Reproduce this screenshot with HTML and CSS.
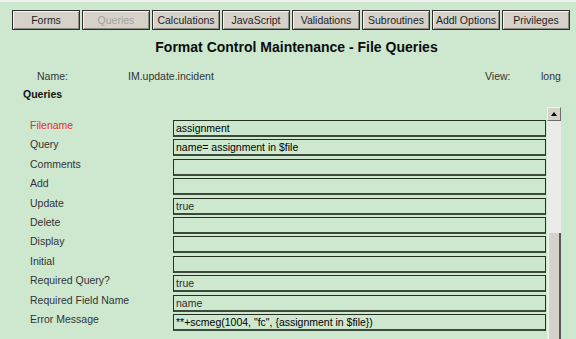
FILE: index.html
```html
<!DOCTYPE html>
<html lang="en">
<head>
    <meta charset="UTF-8">
    <title>Format Control Maintenance - File Queries</title>
    <link rel="stylesheet" href="styles.css">
</head>
<body>
    <div class="topbar"></div>

    <div class="tabs">
        <button class="tab">Forms</button>
        <button class="tab disabled">Queries</button>
        <button class="tab">Calculations</button>
        <button class="tab">JavaScript</button>
        <button class="tab">Validations</button>
        <button class="tab">Subroutines</button>
        <button class="tab">Addl Options</button>
        <button class="tab">Privileges</button>
    </div>

    <h1>Format Control Maintenance - File Queries</h1>

    <div class="info">
        <span class="info-label">Name:</span>
        <span>IM.update.incident</span>
        <span class="info-label">View:</span>
        <span>long</span>
    </div>

    <h2>Queries</h2>

    <div class="panel">
        <div class="rows">
            <label class="required">Filename</label>
            <div class="field big">assignment</div>
            <label>Query</label>
            <div class="field big">name= assignment in $file</div>
            <label>Comments</label>
            <div class="field"></div>
            <label>Add</label>
            <div class="field"></div>
            <label>Update</label>
            <div class="field">true</div>
            <label>Delete</label>
            <div class="field"></div>
            <label>Display</label>
            <div class="field"></div>
            <label>Initial</label>
            <div class="field"></div>
            <label>Required Query?</label>
            <div class="field">true</div>
            <label>Required Field Name</label>
            <div class="field">name</div>
            <label>Error Message</label>
            <div class="field big">**+scmeg(1004, "fc", {assignment in $file})</div>
        </div>
        <div class="scrollbar">
            <div class="scroll-btn"><span class="arrow"></span></div>
            <div class="thumb"></div>
        </div>
    </div>
</body>
</html>
```

FILE: styles.css
```css
body {
    margin: 0;
    background-color: #cde8cf;
    font-family: 'Liberation Sans', Arial, sans-serif;
    font-size: 10.5px;
    color: #2b2b2b;
    overflow: hidden;
}
.topbar {
    height: 2px;
    background-color: #eef1ee;
}
.tabs {
    display: flex;
    gap: 2px;
    padding-left: 12px;
    margin-top: 8px;
}
.tab {
    width: 68px;
    height: 20px;
    padding: 0;
    background-color: #d6d2ca;
    border: 1px solid #2e2e2e;
    box-shadow: inset 1px 1px 0 #f4f2ee, inset -1px -1px 0 #8e8b85;
    font-family: 'Liberation Sans', Arial, sans-serif;
    font-size: 10.5px;
    color: #1e1e1e;
}
.tab.disabled {
    color: #a4a29e;
}
h1 {
    margin: 9px 0 0 17px;
    text-align: center;
    font-size: 14px;
    line-height: 16px;
    color: #0c0c0c;
}
.info {
    display: grid;
    grid-template-columns: 91px 357px 56px auto;
    padding-left: 37px;
    margin-top: 15px;
    line-height: 12px;
    color: #333;
}
h2 {
    margin: 6px 0 0 23px;
    font-size: 10.5px;
    line-height: 12px;
    color: #111;
}
.panel {
    display: flex;
    margin-top: 7px;
    height: 240px;
}
.rows {
    display: grid;
    grid-template-columns: 143px 373px;
    grid-auto-rows: 17px;
    row-gap: 2.4px;
    padding: 13px 0 0 30px;
    align-items: start;
}
.rows label {
    line-height: 11px;
    color: #333;
}
.rows label.required {
    color: #ee2a2a;
}
.field {
    box-sizing: border-box;
    height: 17px;
    border: 1px solid #26321f;
    border-bottom: 2px solid #3b4a3b;
    padding: 1px 2px 0;
    line-height: 13px;
    color: #2b2b2b;
}
.field.big {
    font-size: 10.5px;
    color: #000;
}
.scrollbar {
    position: relative;
    width: 14px;
    margin-left: 1px;
    background-color: #ebebe9;
}
.scroll-btn {
    box-sizing: border-box;
    height: 14px;
    background-color: #d6d2ca;
    border: 1px solid;
    border-color: #f4f2ee #6f6d69 #6f6d69 #f4f2ee;
    display: flex;
    align-items: center;
    justify-content: center;
}
.arrow {
    width: 0;
    height: 0;
    border-left: 3px solid transparent;
    border-right: 3px solid transparent;
    border-bottom: 4px solid #000;
}
.thumb {
    position: absolute;
    top: 126px;
    left: 1px;
    right: 0;
    bottom: 0;
    background-color: #d6d2ca;
    border-right: 2px solid #5a5955;
    border-left: 1px solid #f4f2ee;
}
```
